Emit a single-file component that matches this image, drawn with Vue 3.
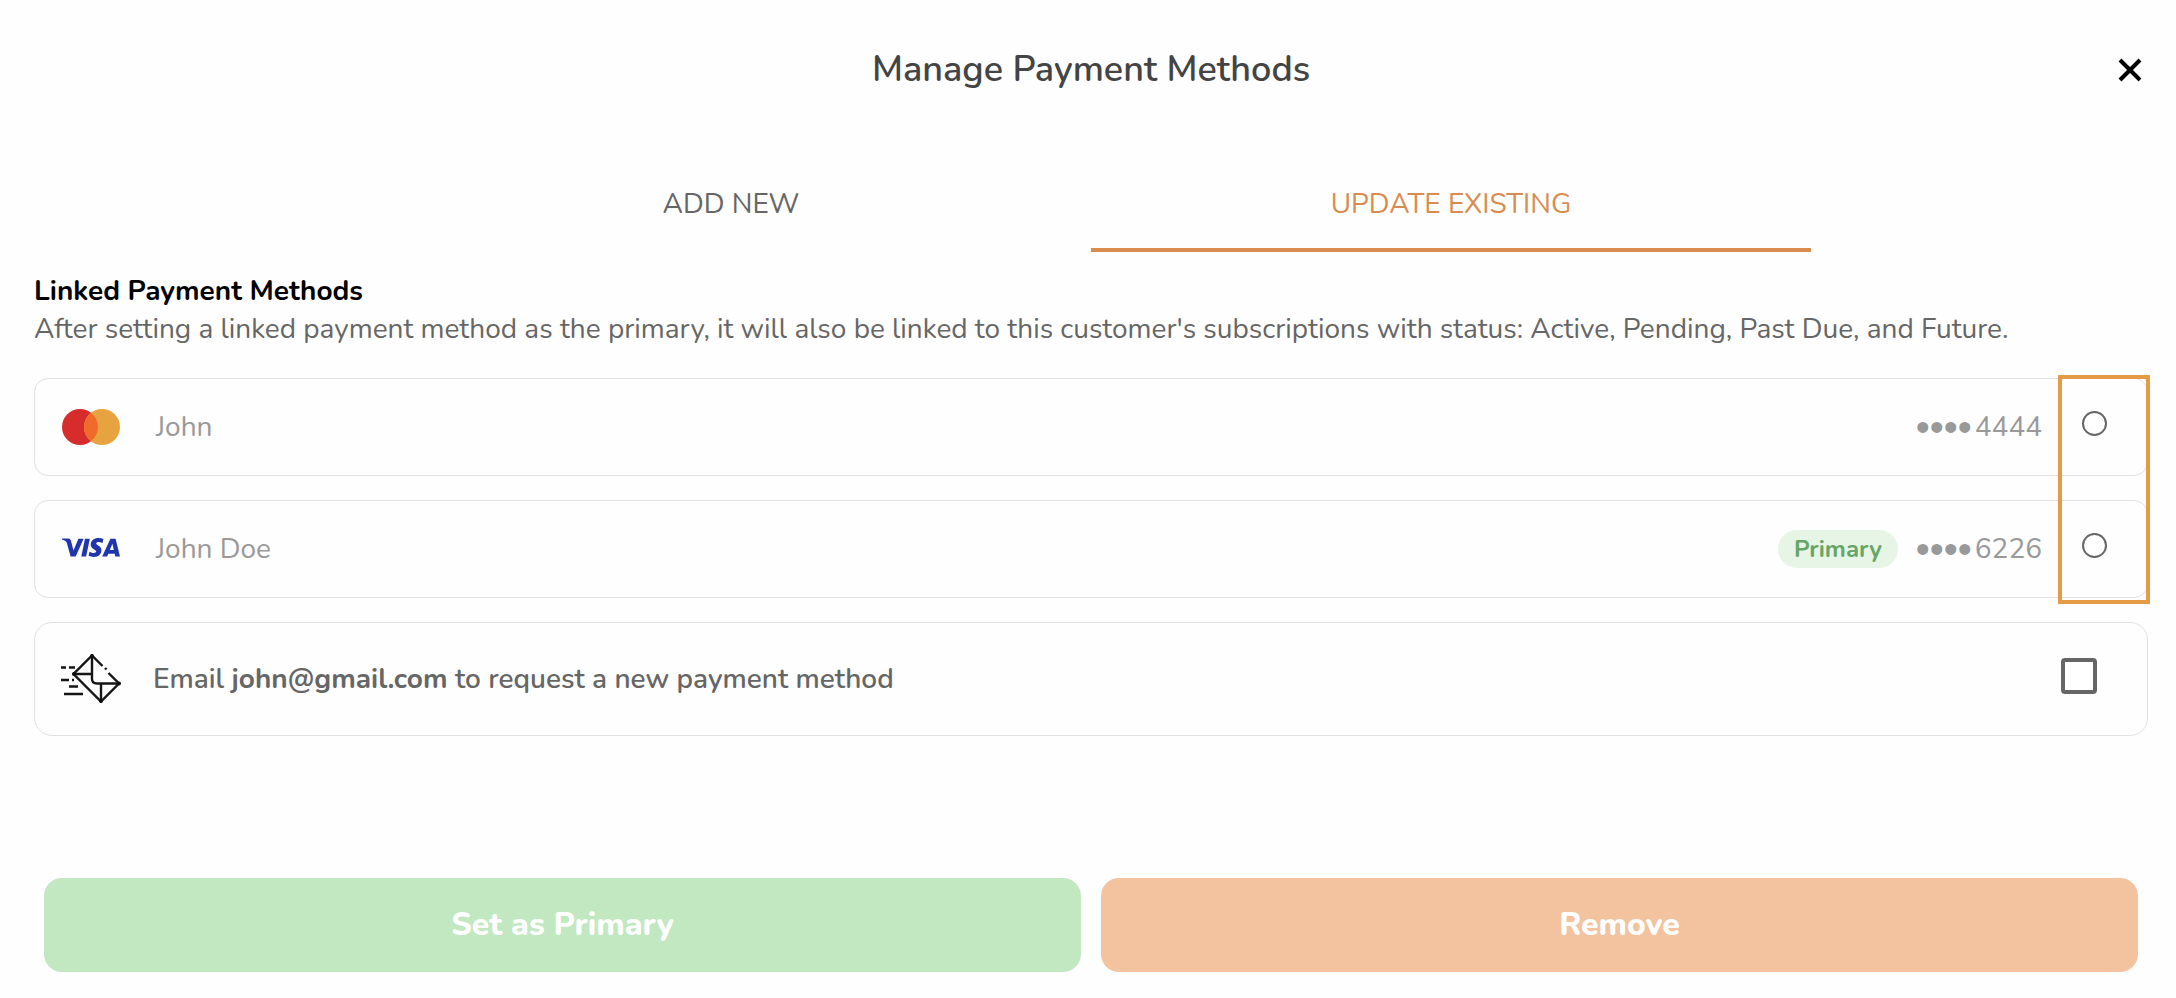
<script setup>
import { ref } from 'vue'

const tabs = ['ADD NEW', 'UPDATE EXISTING']
const activeTab = ref(1)
const selected = ref(null)
const sendEmail = ref(false)
const methods = [
  { id: 'mc', brand: 'mastercard', name: 'John', last4: '4444', primary: false },
  { id: 'visa', brand: 'visa', name: 'John Doe', last4: '6226', primary: true }
]
</script>

<template>
  <main class="dialog">
    <header class="head">
      <h1>Manage Payment Methods</h1>
      <button class="close" type="button" aria-label="Close">
        <svg viewBox="0 0 24 24" width="24" height="24"><path d="M2 2L22 22M22 2L2 22" stroke="#000" stroke-width="4" /></svg>
      </button>
    </header>

    <nav class="tabs" role="tablist">
      <button
        v-for="(tab, i) in tabs"
        :key="tab"
        type="button"
        role="tab"
        :aria-selected="activeTab === i"
        :class="{ active: activeTab === i }"
        @click="activeTab = i"
      >{{ tab }}</button>
    </nav>

    <section>
      <h2>Linked Payment Methods</h2>
      <p class="note">After setting a linked payment method as the primary, it will also be linked to this customer's subscriptions with status: Active, Pending, Past Due, and Future.</p>

      <div class="methods">
        <label v-for="m in methods" :key="m.id" class="card">
          <svg v-if="m.brand === 'mastercard'" class="brand" viewBox="0 0 58 36" width="58" height="36" aria-hidden="true">
            <circle cx="18" cy="18" r="18" fill="#d62d2c" />
            <circle cx="40" cy="18" r="18" fill="#e8a341" />
            <path d="M29 3.8A18 18 0 0 1 29 32.2A18 18 0 0 1 29 3.8Z" fill="#f06a2c" />
          </svg>
          <svg v-else class="brand" viewBox="0 0 58 36" width="58" height="36" aria-hidden="true">
            <g fill="#2036ad">
              <path d="M0 7.6H6.4Q8.4 7.7 8.9 9.6L11.5 19.5L16.4 7.7H21.6L13.7 25.6H8.6L4.7 11.4Q4.4 9.8 0 8.4Z" />
              <path d="M23 7.7H27.8L24.1 25.6H19.3Z" />
              <path d="M41.4 8.1L40.5 12Q35.2 10 34.2 12.2C33.7 14 40.3 14.8 39.4 20.2C38.4 26.3 31.2 26.9 26.6 24.8L27.5 20.7C30.5 22.2 33.8 22.5 34.2 20.5C34.3 18.5 27.8 17.9 28.8 12.5C29.8 7.2 36.8 5.8 41.4 8.1Z" />
              <path fill-rule="evenodd" d="M48.4 7.7H53.6L58 25.6H53.3L52.7 22.8H46.3L45.2 25.6H40.2ZM50.4 12.7L47.8 19.1H51.8Z" />
            </g>
          </svg>
          <span class="name">{{ m.name }}</span>
          <span v-if="m.primary" class="badge">Primary</span>
          <span class="number"><span class="dots">••••</span>{{ m.last4 }}</span>
          <input v-model="selected" type="radio" name="method" :value="m.id" />
        </label>
        <div class="highlight" aria-hidden="true"></div>
      </div>

      <label class="card email">
        <svg class="mail" viewBox="0 0 60 50" width="60" height="50" aria-hidden="true">
          <g fill="none" stroke="#151515" stroke-width="2.4">
            <path d="M41.5 12L31 1.5L12.5 20L40 47.5L58 29.5L47.5 19" />
            <path d="M44 14L45.5 15.5" />
            <path d="M31 1V25Q31 29.5 36 29.5H59M12 20H31M40 30V48" />
            <path d="M0 13.5H5M8 13.5H14M0 26H8M11 26H13M8 32.5H17M3 40H22" />
          </g>
          <g fill="#111"><circle cx="31" cy="2" r="2" /><circle cx="13" cy="20" r="2" /><circle cx="40" cy="47" r="2" /><circle cx="58" cy="29.5" r="2" /></g>
        </svg>
        <span class="request">Email <b>john@gmail.com</b> to request a new payment method</span>
        <input v-model="sendEmail" type="checkbox" />
      </label>
    </section>

    <footer class="actions">
      <button class="primary" type="button">Set as Primary</button>
      <button class="remove" type="button">Remove</button>
    </footer>
  </main>
</template>

<style>
body {
  margin: 0;
  background: #fefefe;
}
</style>

<style scoped>
.dialog {
  box-sizing: border-box;
  padding: 40px 28px 26px 34px;
  font-family: Nunito, "Open Sans", sans-serif;
  font-size: 28px;
  line-height: 38px;
  color: #666;
}

button {
  font: inherit;
  border: 0;
  padding: 0;
  background: none;
  cursor: pointer;
}

.head {
  display: grid;
  grid-template-columns: 1fr auto 1fr;
  align-items: center;
  height: 60px;
}

h1 {
  grid-column: 2;
  margin: 0;
  font-size: 36px;
  font-weight: 600;
  color: #444;
}

.close {
  justify-self: end;
  display: flex;
  margin-right: 6px;
}

.tabs {
  display: flex;
  justify-content: center;
  margin-top: 56px;
}

.tabs button {
  flex: 0 1 720px;
  height: 96px;
  border-top: 4px solid transparent;
  border-bottom: 4px solid transparent;
  color: #666;
}

.tabs .active {
  color: #d98c4f;
  border-bottom-color: #d98c4f;
}

h2 {
  margin: 20px 0 0;
  font-size: 28px;
  line-height: 38px;
  font-weight: 700;
  color: #000;
}

.note {
  margin: 0 0 30px;
}

.methods {
  position: relative;
  display: grid;
  gap: 24px;
}

.highlight {
  position: absolute;
  top: -3px;
  right: -2px;
  bottom: -6px;
  width: 84px;
  border: 4px solid #e59b45;
  pointer-events: none;
}

.card {
  box-sizing: border-box;
  display: flex;
  align-items: center;
  min-height: 98px;
  padding: 0 40px 0 27px;
  border: 1px solid #e2e2e2;
  border-radius: 14px;
}

.name {
  flex: 1;
  margin-left: 36px;
  color: #999;
}

.badge {
  padding: 0 16px;
  margin-right: 18px;
  border-radius: 19px;
  background: #e6f5e6;
  color: #67a567;
  font-size: 24px;
  font-weight: 700;
}

.number {
  display: flex;
  align-items: center;
  color: #999;
}

.dots {
  margin-right: 3px;
  font-family: "Liberation Sans", sans-serif;
  font-size: 40px;
}

input {
  appearance: none;
  box-sizing: border-box;
  margin: 0;
  background: #fff;
}

input[type="radio"] {
  width: 25px;
  height: 25px;
  margin: 0 0 7px 40px;
  border: 2px solid #666;
  border-radius: 50%;
}

input[type="checkbox"] {
  width: 36px;
  height: 36px;
  margin: 0 10px 6px 0;
  border: 4px solid #666;
  border-radius: 4px;
}

.email {
  min-height: 114px;
  margin-top: 24px;
  padding-left: 26px;
  border-radius: 18px;
}

.mail {
  flex: none;
}

.request {
  flex: 1;
  margin-left: 32px;
  font-weight: 600;
}

.request b {
  font-weight: 700;
}

.actions {
  display: grid;
  grid-template-columns: 1fr 1fr;
  gap: 20px;
  margin-top: 142px;
  padding: 0 10px;
}

.actions button {
  height: 94px;
  border-radius: 18px;
  color: #fff;
  font-size: 32px;
  font-weight: 800;
}

.actions .primary {
  background: #c1e8c1;
}

.actions .remove {
  background: #f3c29f;
}
</style>
